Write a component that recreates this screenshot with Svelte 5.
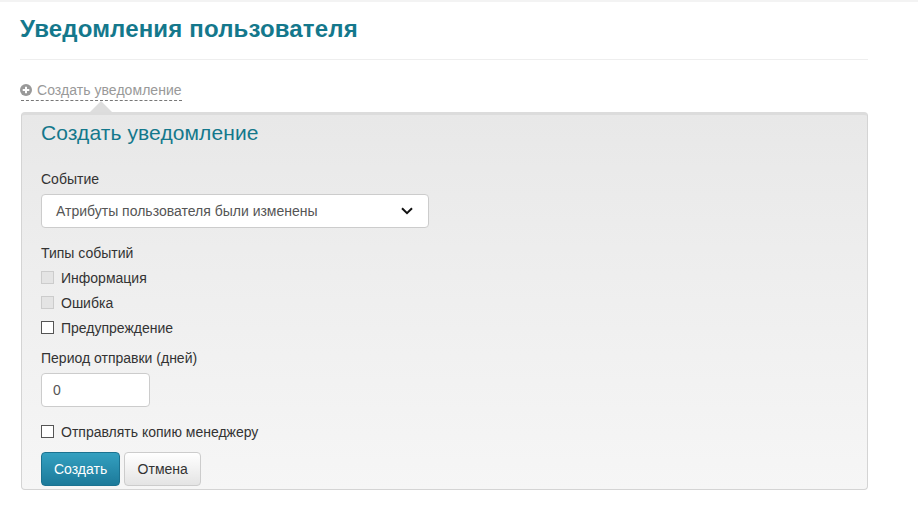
<script>
    let eventType = 'Атрибуты пользователя были изменены';
    let period = 0;
    let sendCopy = false;

    const kinds = [
        { label: 'Информация', locked: true },
        { label: 'Ошибка', locked: true },
        { label: 'Предупреждение', locked: false }
    ];
</script>

<div class="page">
    <h1>Уведомления пользователя</h1>

    <div class="toggle-row">
        <button type="button" class="toggle">
            <svg class="plus" viewBox="0 0 12 12" width="12" height="12" aria-hidden="true">
                <circle cx="6" cy="6" r="6" fill="#999" />
                <path d="M2.7 6h6.6M6 2.7v6.6" stroke="#fff" stroke-width="2" />
            </svg>
            Создать уведомление
        </button>
    </div>

    <form class="panel" on:submit|preventDefault>
        <h2>Создать уведомление</h2>

        <label class="field-label" for="event">Событие</label>
        <div class="select" id="event">
            <span>{eventType}</span>
            <svg viewBox="0 0 12 8" width="12" height="8" aria-hidden="true">
                <path d="M1 1.2l5 5 5-5" fill="none" stroke="#111" stroke-width="2" />
            </svg>
        </div>

        <div class="field-label types">Типы событий</div>
        {#each kinds as kind}
            <label class="check">
                <input type="checkbox" disabled={kind.locked} />
                {kind.label}
            </label>
        {/each}

        <label class="field-label period" for="period">Период отправки (дней)</label>
        <input class="number" id="period" type="text" bind:value={period} />

        <label class="check copy">
            <input type="checkbox" bind:checked={sendCopy} />
            Отправлять копию менеджеру
        </label>

        <div class="actions">
            <button type="submit" class="btn primary">Создать</button>
            <button type="button" class="btn cancel">Отмена</button>
        </div>
    </form>
</div>

<style>
    :global(body) {
        margin: 0;
        background: #fff;
        font-family: "Liberation Sans", Arial, sans-serif;
        font-size: 14px;
        color: #333;
    }
    .page {
        width: 848px;
        margin-left: 20px;
        padding-top: 3px;
        box-sizing: border-box;
    }
    .page::before {
        content: '';
        position: absolute;
        top: 0;
        left: 0;
        right: 0;
        height: 2px;
        background: #f3f3f3;
    }
    h1 {
        margin: 0;
        padding: 11px 0 16px;
        height: 29px;
        line-height: 29px;
        font-size: 24px;
        letter-spacing: 0.16px;
        font-weight: bold;
        color: #14788c;
        border-bottom: 1px solid #eee;
    }
    .toggle-row {
        padding-top: 21px;
        height: 31px;
    }
    .toggle {
        display: inline-flex;
        align-items: center;
        gap: 5px;
        height: 20px;
        margin-left: 1px;
        padding: 0 0 2px;
        border: 0;
        border-bottom: 1px dashed #777;
        background: none;
        font: inherit;
        letter-spacing: 0.05px;
        color: #999;
    }
    .plus {
        margin-left: -1px;
    }
    .panel {
        position: relative;
        margin-left: 1px;
        height: 378px;
        box-sizing: border-box;
        padding: 0 19px;
        border: 1px solid #d4d4d4;
        border-top: 3px solid #dcdcdc;
        border-radius: 4px;
        background: linear-gradient(#e8e8e8, #f6f6f6);
    }
    .panel::before {
        content: '';
        position: absolute;
        top: -14px;
        left: 68px;
        border: 11px solid transparent;
        border-top: 0;
        border-bottom: 11px solid #ddd;
    }
    h2 {
        margin: 0;
        padding-top: 4px;
        font-size: 21px;
        letter-spacing: 0.1px;
        line-height: 28px;
        font-weight: normal;
        color: #14788c;
    }
    .field-label {
        display: block;
        line-height: 20px;
    }
    label[for='event'] {
        margin-top: 22px;
    }
    .select {
        display: flex;
        align-items: center;
        justify-content: space-between;
        width: 388px;
        height: 34px;
        margin-top: 5px;
        padding: 0 15px 0 14px;
        box-sizing: border-box;
        background: #fff;
        border: 1px solid #ccc;
        border-radius: 4px;
        color: #555;
    }
    .types {
        margin-top: 15px;
        margin-bottom: 2px;
    }
    .check {
        display: flex;
        align-items: center;
        gap: 7px;
        height: 25px;
    }
    .check input {
        appearance: none;
        width: 13px;
        height: 13px;
        margin: 0;
        background: #fff;
        border: 1px solid #555;
    }
    .check input:disabled {
        background: #e4e4e4;
        border-color: #ccc;
    }
    .period {
        margin-top: 8px;
    }
    .number {
        display: block;
        width: 109px;
        height: 34px;
        margin-top: 5px;
        padding: 0 11px;
        box-sizing: border-box;
        background: #fff;
        border: 1px solid #ccc;
        border-radius: 4px;
        font: inherit;
        color: #555;
    }
    .copy {
        margin-top: 12px;
    }
    .actions {
        display: flex;
        gap: 4px;
        margin-top: 8px;
    }
    .btn {
        height: 34px;
        padding: 0 12px;
        background: linear-gradient(#fff, #e4e4e4);
        border: 1px solid #ccc;
        border-radius: 4px;
        font: inherit;
        color: #333;
    }
    .cancel {
        width: 77px;
    }
    .primary {
        background: linear-gradient(#34a0c0, #1c7a9a);
        border-color: #1b7290;
        color: #fff;
    }
</style>
